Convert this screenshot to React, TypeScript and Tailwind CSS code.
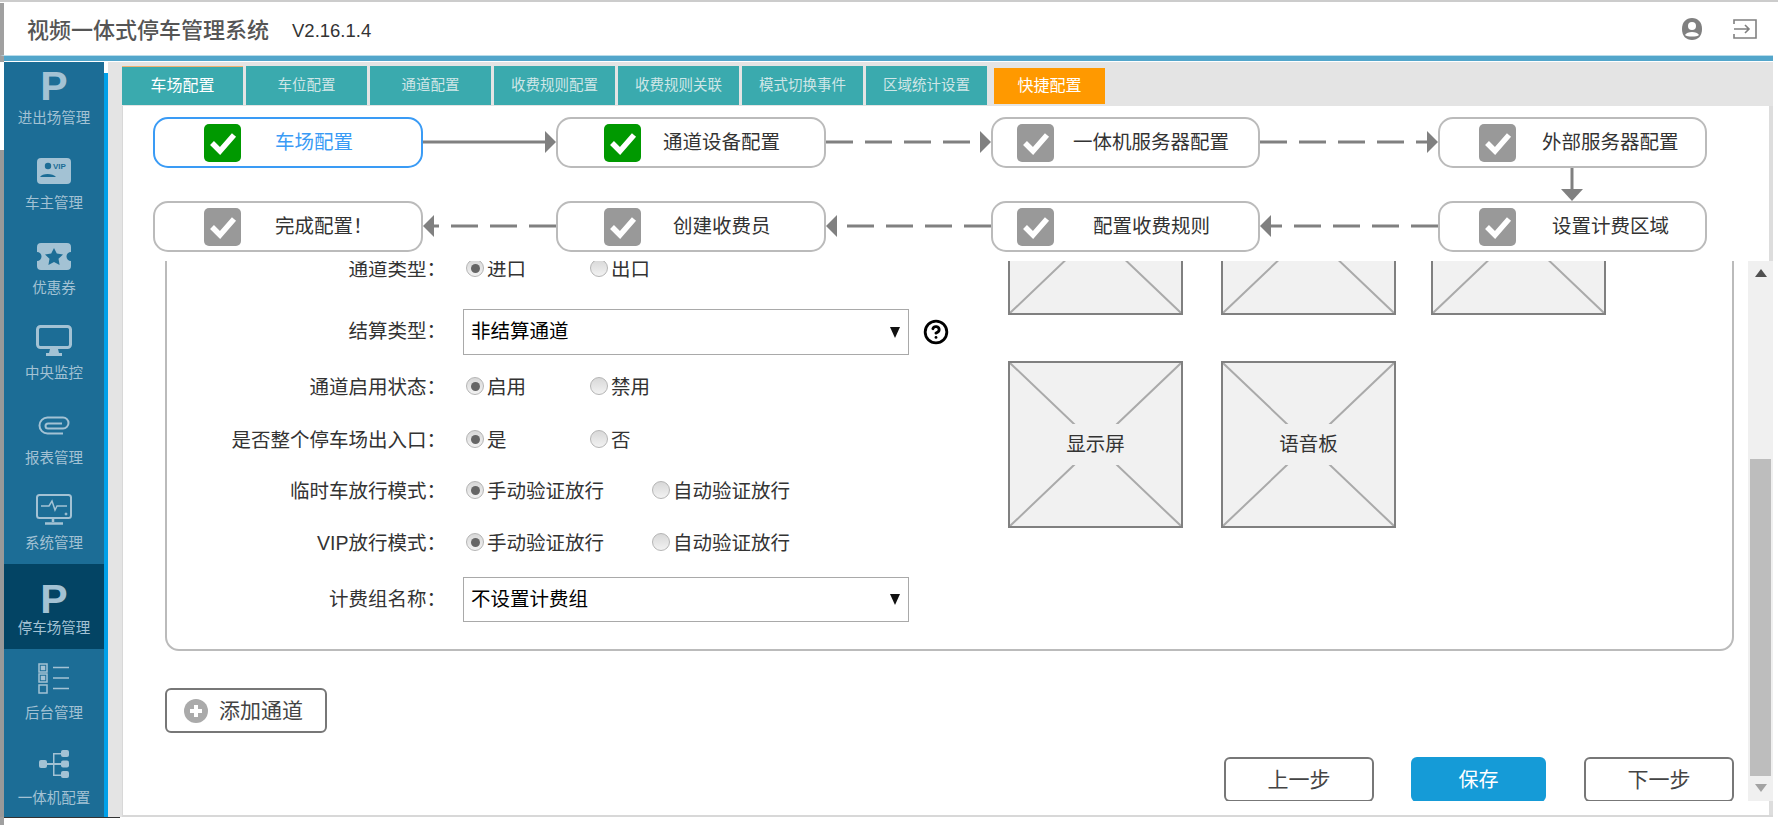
import { CircleHelp } from 'lucide-react';

const tabs = ['车位配置', '通道配置', '收费规则配置', '收费规则关联', '模式切换事件', '区域统计设置'];

function PIcon() {
  return <span className="text-[41px] leading-none font-bold text-[#a3c2d4]">P</span>;
}

function VipIcon() {
  return (
    <svg width="34" height="26" viewBox="0 0 34 26">
      <rect width="34" height="26" rx="4" fill="#a3c2d4" />
      <circle cx="11" cy="8" r="3.2" fill="#1c6d96" />
      <path d="M3 19c2-4 13-4 16 0z" fill="#1c6d96" />
      <text x="16" y="11" fontSize="8" fontWeight="700" fill="#1c6d96" fontFamily="Liberation Sans">VIP</text>
    </svg>
  );
}

function TicketIcon() {
  return (
    <svg width="34" height="27" viewBox="0 0 34 27">
      <path d="M4 0h26a4 4 0 0 1 4 4v5a4.5 4.5 0 0 0 0 9v5a4 4 0 0 1-4 4H4a4 4 0 0 1-4-4v-5a4.5 4.5 0 0 0 0-9V4a4 4 0 0 1 4-4z" fill="#a3c2d4" />
      <path d="M17 5l2.8 5.6 6.2.9-4.5 4.3 1.1 6.2-5.6-3-5.6 3 1.1-6.2L8 11.5l6.2-.9z" fill="#1c6d96" />
    </svg>
  );
}

function MonitorIcon() {
  return (
    <svg width="36" height="32" viewBox="0 0 36 32">
      <rect x="1.5" y="1.5" width="33" height="21" rx="3" fill="none" stroke="#a3c2d4" strokeWidth="3" />
      <path d="M14 24h8l1 4h3v3H10v-3h3z" fill="#a3c2d4" />
    </svg>
  );
}

function ClipIcon() {
  return (
    <svg width="32" height="19" viewBox="0 0 32 19" fill="none" stroke="#a3c2d4" strokeWidth="2">
      <path d="M25 17.5H9.5a8 8 0 0 1 0-16H25a5.500 5.500 0 0 1 0 11H10a2.500 2.500 0 0 1 0-5h14" />
    </svg>
  );
}

function SystemIcon() {
  return (
    <svg width="36" height="32" viewBox="0 0 36 32" fill="none" stroke="#a3c2d4">
      <rect x="1" y="1" width="34" height="23" rx="2.500" strokeWidth="2" />
      <path d="M5 12h8l3-5 3 9 2-4h10" strokeWidth="1.500" />
      <circle cx="30" cy="20" r="1" fill="#a3c2d4" />
      <path d="M17 24v4M9 29.500h18" strokeWidth="2.500" />
    </svg>
  );
}

function ListIcon() {
  return (
    <svg width="32" height="31" viewBox="0 0 32 31" fill="none" stroke="#a3c2d4" strokeWidth="1.500">
      <rect x="1" y="1" width="8" height="8" />
      <rect x="1" y="11" width="8" height="8" />
      <rect x="1" y="22" width="8" height="8" />
      <rect x="3.500" y="3.500" width="3" height="3" fill="#a3c2d4" />
      <rect x="3.500" y="13.500" width="3" height="3" fill="#a3c2d4" />
      <path d="M15 4.500h16M15 15h16M15 25.500h16" />
    </svg>
  );
}

function TreeIcon() {
  return (
    <svg width="30" height="28" viewBox="0 0 30 28" fill="#a3c2d4">
      <rect y="10" width="8" height="8" rx="2" />
      <rect x="22" y="0" width="8" height="7" rx="2" />
      <rect x="22" y="10.500" width="8" height="7" rx="2" />
      <rect x="22" y="21" width="8" height="7" rx="2" />
      <path d="M8 13h6V3h8v1.500h-6.500V13H22v2h-6.500v9.500H22V26h-8V15H8z" />
    </svg>
  );
}

const menu = [
  { label: '进出场管理', Icon: PIcon, pad: 'pt-[10px]' },
  { label: '车主管理', Icon: VipIcon, pad: 'pt-[10px]' },
  { label: '优惠券', Icon: TicketIcon, pad: 'pt-[10px]' },
  { label: '中央监控', Icon: MonitorIcon, pad: 'pt-[10px]' },
  { label: '报表管理', Icon: ClipIcon, pad: 'pt-[8px]' },
  { label: '系统管理', Icon: SystemIcon, pad: 'pt-[8px]' },
  { label: '停车场管理', Icon: PIcon, pad: 'pt-[16px]', active: true },
  { label: '后台管理', Icon: ListIcon, pad: 'pt-[4px]' },
  { label: '一体机配置', Icon: TreeIcon, pad: 'pt-[6px]' },
];

function Sidebar() {
  return (
    <div className="w-[100px] shrink-0 overflow-hidden bg-[#1c6d96]">
      <div className="-mt-[8px]">
        {menu.map(({ label, Icon, pad, active }) => (
          <div key={label} className={`h-[85px] flex flex-col items-center ${active ? 'bg-[#034464]' : ''}`}>
            <div className={`h-[54px] flex items-center justify-center ${pad}`}>
              <Icon />
            </div>
            <div className="text-[14.5px] leading-[20px] text-[#a3c2d4]">{label}</div>
          </div>
        ))}
      </div>
    </div>
  );
}

function Check({ done }: { done: boolean }) {
  return (
    <div className={`w-[37px] h-[38px] rounded-[5px] flex items-center justify-center ${done ? 'bg-[#009900]' : 'bg-[#999999]'}`}>
      <svg width="28" height="24" viewBox="0 0 28 24" fill="none" stroke="#fff" strokeWidth="5.500">
        <path d="M3 12l8 8L25 4" />
      </svg>
    </div>
  );
}

function Step({ label, iconAt, textAt, width = 'w-[270px]', done = false, active = false }: { label: string; iconAt: string; textAt: string; width?: string; done?: boolean; active?: boolean }) {
  return (
    <div className={`${width} h-[51px] shrink-0 flex items-center rounded-[15px] border-2 bg-white ${active ? 'border-[#3a9bf5]' : 'border-[#bbbbbb]'}`}>
      <div className={iconAt}>
        <Check done={done} />
      </div>
      <div className={`${textAt} text-[19.5px] whitespace-nowrap ${active ? 'text-[#3a9bf5]' : 'text-[#333333]'}`}>{label}</div>
    </div>
  );
}

function Arrow({ width, left = false, solid = false }: { width: number; left?: boolean; solid?: boolean }) {
  const head = left ? `0,25 11,14 11,36` : `${width},25 ${width - 11},14 ${width - 11},36`;
  const dash = solid ? undefined : '27 12';
  const x1 = left ? width : 0;
  const x2 = left ? (width === 165 ? 20 : 8) : width === 165 ? width - 20 : width - 8;
  return (
    <svg width={width} height="50" className="shrink-0">
      <line x1={x1} y1="25" x2={x2} y2="25" stroke="#808080" strokeWidth="3" strokeDasharray={dash} />
      <polygon points={head} fill="#808080" />
    </svg>
  );
}

function Steps() {
  return (
    <div className="h-[155px] shrink-0 pt-[11px] pl-[30px] border-r-4 border-[#dddddd]">
      <div className="flex">
        <Step label="车场配置" iconAt="ml-[49px]" textAt="ml-[34px]" done active />
        <Arrow width={133} solid />
        <Step label="通道设备配置" iconAt="ml-[46px]" textAt="ml-[22px]" done />
        <Arrow width={165} />
        <Step label="一体机服务器配置" iconAt="ml-[24px]" textAt="ml-[19px]" width="w-[269px]" />
        <Arrow width={178} />
        <Step label="外部服务器配置" iconAt="ml-[39px]" textAt="ml-[26px]" width="w-[269px]" />
      </div>
      <div className="h-[33px] pl-[1408px]">
        <svg width="22" height="33" viewBox="0 0 22 33">
          <line x1="11" y1="0" x2="11" y2="24" stroke="#808080" strokeWidth="3" />
          <polygon points="0,21 22,21 11,33" fill="#808080" />
        </svg>
      </div>
      <div className="flex">
        <Step label="完成配置！" iconAt="ml-[49px]" textAt="ml-[34px]" />
        <Arrow width={133} left />
        <Step label="创建收费员" iconAt="ml-[46px]" textAt="ml-[32px]" />
        <Arrow width={165} left />
        <Step label="配置收费规则" iconAt="ml-[24px]" textAt="ml-[39px]" width="w-[269px]" />
        <Arrow width={178} left />
        <Step label="设置计费区域" iconAt="ml-[39px]" textAt="ml-[36px]" width="w-[269px]" />
      </div>
    </div>
  );
}

function Radio({ label, checked = false, width }: { label: string; checked?: boolean; width: string }) {
  return (
    <div className={`${width} flex items-center`}>
      <div className="w-[18px] h-[18px] -mt-[4px] rounded-full border border-[#b5b5b5] flex items-center justify-center bg-gradient-to-b from-[#d8d8d8] to-[#f2f2f2]">
        {checked && <div className="w-[9px] h-[9px] rounded-full bg-[#666666]" />}
      </div>
      <span className="ml-[3px] text-[19.5px] text-[#333333]">{label}</span>
    </div>
  );
}

function RadioGroup({ children }: { children: React.ReactNode }) {
  return <div className="pl-[3px] flex">{children}</div>;
}

function Row({ label, className, children }: { label: string; className: string; children: React.ReactNode }) {
  return (
    <div className={`flex items-center ${className}`}>
      <div className="w-[292px] pr-[13px] shrink-0 text-right text-[19.5px] text-[#333333] whitespace-nowrap">{label}：</div>
      <div className="pl-[4px] flex items-center">{children}</div>
    </div>
  );
}

function Select({ value }: { value: string }) {
  return (
    <div className="w-[446px] h-full flex items-center justify-between pl-[7px] pr-[8px] border border-[#a9a9a9] text-[19.5px] text-black">
      {value}
      <svg width="10" height="11" viewBox="0 0 10 11">
        <polygon points="0,0 10,0 5,11" fill="#111111" />
      </svg>
    </div>
  );
}

function Thumb({ label, className = '' }: { label?: string; className?: string }) {
  return (
    <div className={`relative w-[175px] h-[167px] shrink-0 flex items-center justify-center border-2 border-[#808080] bg-[#f1f1f1] ${className}`}>
      <svg className="absolute inset-0 w-full h-full" viewBox="0 0 171 163" preserveAspectRatio="none">
        <path d="M0 0L171 163M171 0L0 163" stroke="#aaaaaa" strokeWidth="2" />
      </svg>
      {label && <span className="relative px-[8px] py-[6px] bg-[#f1f1f1] text-[19.5px] text-[#333333]">{label}</span>}
    </div>
  );
}

function ChannelPanel() {
  return (
    <div className="w-[1569px] h-[410px] -mt-[20px] flex items-start border-2 border-[#bbbbbb] rounded-[14px]">
      <div className="w-[841px] shrink-0 pt-[7px]">
        <Row label="通道类型" className="h-[40px]">
          <RadioGroup>
            <Radio label="进口" checked width="w-[124px]" />
            <Radio label="出口" width="w-[124px]" />
          </RadioGroup>
        </Row>
        <Row label="结算类型" className="h-[46px] mt-[19px]">
          <div className="h-[46px]">
            <Select value="非结算通道" />
          </div>
          <CircleHelp className="ml-[14px] w-[26px] h-[26px] text-black" strokeWidth={2.6} />
        </Row>
        <Row label="通道启用状态" className="h-[40px] mt-[13px]">
          <RadioGroup>
            <Radio label="启用" checked width="w-[124px]" />
            <Radio label="禁用" width="w-[124px]" />
          </RadioGroup>
        </Row>
        <Row label="是否整个停车场出入口" className="h-[40px] mt-[13px]">
          <RadioGroup>
            <Radio label="是" checked width="w-[124px]" />
            <Radio label="否" width="w-[124px]" />
          </RadioGroup>
        </Row>
        <Row label="临时车放行模式" className="h-[40px] mt-[11px]">
          <RadioGroup>
            <Radio label="手动验证放行" checked width="w-[186px]" />
            <Radio label="自动验证放行" width="w-[140px]" />
          </RadioGroup>
        </Row>
        <Row label="VIP放行模式" className="h-[40px] mt-[12px]">
          <RadioGroup>
            <Radio label="手动验证放行" checked width="w-[186px]" />
            <Radio label="自动验证放行" width="w-[140px]" />
          </RadioGroup>
        </Row>
        <Row label="计费组名称" className="h-[45px] mt-[13px]">
          <div className="h-[45px]">
            <Select value="不设置计费组" />
          </div>
        </Row>
      </div>
      <div className="-mt-[95px]">
        <div className="flex">
          <Thumb />
          <Thumb className="ml-[38px]" />
          <Thumb className="ml-[35px]" />
        </div>
        <div className="flex mt-[46px]">
          <Thumb label="显示屏" />
          <Thumb label="语音板" className="ml-[38px]" />
        </div>
      </div>
    </div>
  );
}

function Scrollbar() {
  return (
    <div className="w-[25px] h-[540px] shrink-0 flex flex-col items-center bg-[#f0f0f0]">
      <svg width="12" height="8" viewBox="0 0 12 8" className="mt-[8px]">
        <polygon points="6,0 12,8 0,8" fill="#505050" />
      </svg>
      <div className="w-[21px] h-[317px] mt-[182px] bg-[#bdbdbd]" />
      <svg width="12" height="8" viewBox="0 0 12 8" className="mt-[8px]">
        <polygon points="0,0 12,0 6,8" fill="#a3a3a3" />
      </svg>
    </div>
  );
}

export default function App() {
  return (
    <div className="w-[1778px] h-[825px] overflow-hidden bg-white font-['Liberation_Sans','Noto_Sans_CJK_SC',sans-serif]">
      <div className="h-[3px] border-t-2 border-[#cccccc]" />
      <div className="h-[52px] flex items-center pl-[23px] pr-[21px] border-l-4 border-[#a0a0a0] bg-white">
        <div className="mt-[2px] text-[22px] font-medium text-[#555555]">视频一体式停车管理系统</div>
        <div className="ml-[23px] mt-[3px] text-[18.5px] text-[#333333]">V2.16.1.4</div>
        <svg className="ml-auto" width="24" height="24" viewBox="0 0 24 24">
          <path d="M12 1c6 0 10 4 10 11s-4 11-10 11S2 19 2 12 6 1 12 1z" fill="#808080" />
          <circle cx="12" cy="9" r="4" fill="#fff" />
          <path d="M5 18c2-4 12-4 14 0-2 2-12 2-14 0z" fill="#fff" />
        </svg>
        <svg className="ml-[29px]" width="24" height="20" viewBox="0 0 24 20" fill="none" stroke="#808080" strokeWidth="1.600">
          <path d="M1 5V1h22v18H1v-4" />
          <path d="M1 10h15M12 6l4 4-4 4" />
        </svg>
      </div>
      <div className="h-[6px] w-[1773px] border-l-4 border-t border-l-[#a0a0a0] border-t-[#b9dcea] bg-[#53a6cb]" />
      <div className="h-px border-l-4 border-[#a0a0a0]" />
      <div className="h-[755px] flex">
        <div className="w-[4px] shrink-0 flex flex-col">
          <div className="h-[88px] bg-white" />
          <div className="flex-1 bg-[#999999]" />
        </div>
        <Sidebar />
        <div className="w-[4px] shrink-0 mt-[11px] bg-[#00a0e9]" />
        <div className="w-[1665px] shrink-0 flex flex-col bg-[#e4e4e4]">
          <div className="h-[44px] pt-[4px] pl-[14px] flex gap-[3px] shrink-0">
            <div className="w-[121px] h-[39px] flex items-center justify-center border-t border-[#f0b070] bg-[#3aaaae] text-[16px] text-white">车场配置</div>
            {tabs.map((t) => (
              <div key={t} className="w-[121px] h-[39px] flex items-center justify-center bg-[#3aaaae] text-[14.500px] text-[#cfe6e7]">
                {t}
              </div>
            ))}
            <div className="w-[111px] h-[36px] mt-[2px] ml-[4px] flex items-center justify-center bg-[#ff9900] text-[16px] text-white">快捷配置</div>
          </div>
          <div className="ml-[14px] flex-1 flex flex-col border-l border-b-2 border-[#d8d8d8] bg-white">
            <Steps />
            <div className="h-[540px] shrink-0 flex">
              <div className="flex-1 min-w-0 overflow-hidden pl-[42px]">
                <ChannelPanel />
                <div className="w-[162px] h-[45px] mt-[37px] flex items-center pl-[17px] rounded-[6px] border-2 border-[#777777] text-[21px] text-[#444444]">
                  <svg width="24" height="24" viewBox="0 0 24 24">
                    <circle cx="12" cy="12" r="12" fill="#aaaaaa" />
                    <path d="M12 6v12M6 12h12" stroke="#fff" strokeWidth="4" />
                  </svg>
                  <span className="ml-[11px]">添加通道</span>
                </div>
                <div className="w-[1569px] mt-[24px] flex justify-end text-[21px]">
                  <div className="w-[150px] h-[45px] flex items-center justify-center rounded-[6px] border-2 border-[#777777] text-[#444444]">上一步</div>
                  <div className="w-[135px] h-[45px] ml-[37px] flex items-center justify-center rounded-[6px] bg-[#159bd7] text-[20px] text-white">保存</div>
                  <div className="w-[150px] h-[45px] ml-[38px] flex items-center justify-center rounded-[6px] border-2 border-[#777777] text-[#444444]">下一步</div>
                </div>
              </div>
              <Scrollbar />
            </div>
            <div className="flex-1 border-r-4 border-[#dddddd]" />
          </div>
        </div>
      </div>
      <div className="h-[8px] flex border-l-4 border-[#a0a0a0]">
        <div className="w-[116px] h-px bg-[#333333]" />
      </div>
    </div>
  );
}
